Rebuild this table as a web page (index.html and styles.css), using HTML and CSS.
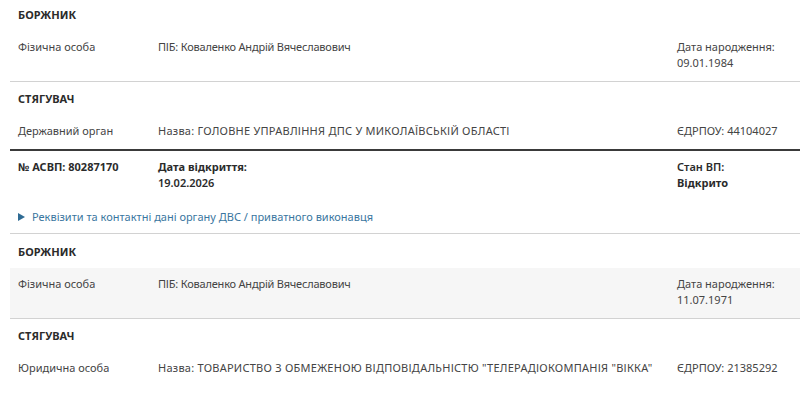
FILE: index.html
```html
<!DOCTYPE html>
<html lang="uk">
<head>
<meta charset="utf-8">
<link rel="stylesheet" href="styles.css">
</head>
<body>
<div class="page">
  <div class="party">
    <div class="party-title">БОРЖНИК</div>
    <div class="row">
      <div class="cell">Фізична особа</div>
      <div class="cell tight">ПІБ: Коваленко Андрій Вячеславович</div>
      <div class="cell">Дата народження:<br>09.01.1984</div>
    </div>
  </div>
  <div class="party">
    <div class="party-title">СТЯГУВАЧ</div>
    <div class="row">
      <div class="cell">Державний орган</div>
      <div class="cell caps">Назва: ГОЛОВНЕ УПРАВЛІННЯ ДПС У МИКОЛАЇВСЬКІЙ ОБЛАСТІ</div>
      <div class="cell">ЄДРПОУ: 44104027</div>
    </div>
  </div>

  <div class="case">
    <div class="case-head">
      <div class="cell strong">№ АСВП: 80287170</div>
      <div class="cell"><span class="strong">Дата відкриття:</span><br><span class="medium">19.02.2026</span></div>
      <div class="cell"><span class="medium">Стан ВП:</span><br><span class="strong">Відкрито</span></div>
    </div>
    <div class="details"><span class="tri"></span>Реквізити та контактні дані органу ДВС / приватного виконавця</div>
  </div>
  <div class="party after-case">
    <div class="party-title">БОРЖНИК</div>
    <div class="row shaded">
      <div class="cell">Фізична особа</div>
      <div class="cell tight">ПІБ: Коваленко Андрій Вячеславович</div>
      <div class="cell">Дата народження:<br>11.07.1971</div>
    </div>
  </div>
  <div class="party last">
    <div class="party-title">СТЯГУВАЧ</div>
    <div class="row">
      <div class="cell">Юридична особа</div>
      <div class="cell caps">Назва: ТОВАРИСТВО З ОБМЕЖЕНОЮ ВІДПОВІДАЛЬНІСТЮ "ТЕЛЕРАДІОКОМПАНІЯ "ВІККА"</div>
      <div class="cell">ЄДРПОУ: 21385292</div>
    </div>
  </div>
</div>
</body>
</html>
```

FILE: styles.css
```css
* { box-sizing: border-box; }
html, body { margin: 0; padding: 0; background: #fff; }
body {
  font-family: "Noto Sans", "Open Sans", sans-serif;
  font-size: 11px;
  line-height: 16px;
  color: #444;
}
.page {
  margin: -2px 0 0 10px;
}
.party {
  border-bottom: 1px solid #d2d2d2;
}
.party.last { border-bottom: none; }
.party:nth-child(2) { border-bottom: 2px solid #3a3a3a; }
.party-title {
  padding: 9px 8px 8px;
  font-weight: 700;
  color: #2b2b2b;
}
.after-case .party-title { padding-top: 10px; }
.row, .case-head {
  display: grid;
  grid-template-columns: 140px 1fr 115px;
  padding: 8px 8px 10px;
}
.row.shaded { background: #f6f6f6; }
.tight { letter-spacing: -0.2px; }
.caps { letter-spacing: 0.25px; }
.case {
  border-bottom: 1px solid #d2d2d2;
  padding-bottom: 8px;
}
.case-head { padding-bottom: 0; color: #2b2b2b; }
.strong { font-weight: 700; }
.medium { font-weight: 600; }
.details {
  display: flex;
  align-items: center;
  margin-top: 18px;
  padding-left: 8px;
  color: #3a76a0;
}
.tri {
  width: 0;
  height: 0;
  border-left: 7px solid #2f6b94;
  border-top: 4px solid transparent;
  border-bottom: 4px solid transparent;
  margin-right: 7px;
}
```
